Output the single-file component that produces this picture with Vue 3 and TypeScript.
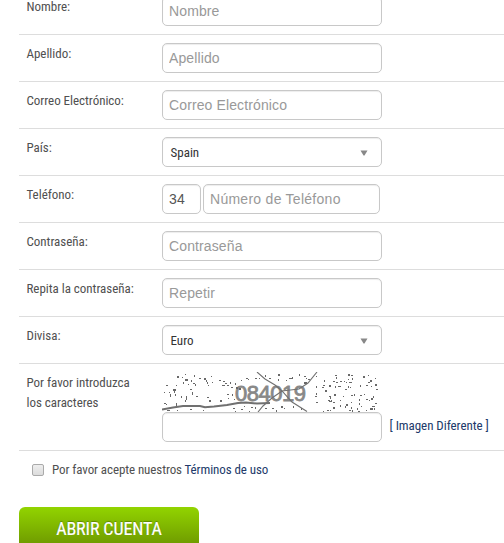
<script setup lang="ts">
interface Field {
  id: string
  label: string
  kind: 'text' | 'select' | 'phone'
  hint: string
}

const fields: Field[] = [
  { id: 'nombre', label: 'Nombre:', kind: 'text', hint: 'Nombre' },
  { id: 'apellido', label: 'Apellido:', kind: 'text', hint: 'Apellido' },
  { id: 'correo', label: 'Correo Electrónico:', kind: 'text', hint: 'Correo Electrónico' },
  { id: 'pais', label: 'País:', kind: 'select', hint: 'Spain' },
  { id: 'telefono', label: 'Teléfono:', kind: 'phone', hint: 'Número de Teléfono' },
  { id: 'clave', label: 'Contraseña:', kind: 'text', hint: 'Contraseña' },
  { id: 'repetir', label: 'Repita la contraseña:', kind: 'text', hint: 'Repetir' },
  { id: 'divisa', label: 'Divisa:', kind: 'select', hint: 'Euro' },
]

// Speckles of the captcha, as [x, y, width, height] on a 220 x 40 grid.
const specks: number[][] = [
  [15, 4, 2, 2], [20, 5, 1, 1], [23, 2, 1, 1], [23, 7, 3, 2], [32, 3, 1, 2], [29, 8, 1, 2], [37, 6, 2, 1],
  [42, 6, 2, 2], [44, 8, 1, 2], [49, 4, 1, 1], [4, 13, 2, 1], [14, 13, 1, 1], [11, 17, 3, 2], [12, 19, 1, 2],
  [2, 20, 1, 1], [7, 20, 1, 1], [8, 22, 1, 3], [13, 22, 1, 2], [21, 10, 1, 2], [26, 12, 1, 1], [31, 11, 2, 1],
  [33, 12, 1, 2], [28, 17, 2, 1], [30, 20, 1, 3], [19, 24, 1, 2], [24, 24, 1, 4], [34, 24, 2, 1], [45, 10, 1, 2],
  [46, 13, 1, 1], [50, 10, 1, 1], [57, 8, 2, 1], [61, 9, 2, 1], [63, 11, 2, 1], [68, 10, 1, 2], [60, 13, 3, 1],
  [65, 13, 2, 1], [69, 15, 2, 1], [73, 11, 1, 2], [74, 15, 2, 2], [45, 25, 2, 1], [47, 28, 2, 2], [65, 22, 2, 1],
  [70, 22, 1, 2], [66, 26, 1, 1], [58, 28, 2, 2], [72, 27, 1, 1], [2, 31, 2, 1], [4, 32, 1, 1], [14, 31, 1, 3],
  [23, 28, 1, 2], [5, 38, 3, 1], [15, 38, 1, 1], [28, 37, 2, 1], [41, 38, 1, 1], [71, 36, 2, 1], [73, 39, 1, 1],
  [84, 6, 2, 1], [86, 7, 1, 1], [93, 6, 2, 1], [79, 8, 1, 1], [77, 16, 2, 2], [82, 34, 1, 1], [89, 35, 2, 1],
  [93, 35, 1, 2], [79, 37, 2, 1], [87, 39, 1, 1], [97, 6, 1, 1], [103, 3, 1, 2], [107, 6, 2, 1], [116, 2, 2, 2],
  [116, 7, 1, 2], [124, 8, 1, 1], [127, 6, 3, 1], [130, 5, 1, 2], [137, 2, 1, 2], [142, 4, 2, 1], [144, 6, 1, 1],
  [142, 10, 3, 2], [146, 7, 2, 1], [103, 36, 2, 1], [110, 36, 2, 1], [114, 38, 1, 2], [119, 34, 2, 2], [122, 36, 1, 1],
  [131, 34, 1, 2], [139, 36, 1, 2], [154, 4, 1, 1], [161, 13, 2, 1], [162, 8, 1, 2], [160, 15, 2, 1], [154, 14, 1, 2],
  [163, 18, 2, 2], [167, 13, 2, 2], [173, 3, 2, 1], [174, 5, 1, 2], [171, 9, 2, 1], [174, 10, 2, 1], [178, 9, 2, 1],
  [173, 14, 1, 2], [176, 14, 3, 1], [186, 2, 2, 2], [189, 3, 2, 1], [186, 7, 1, 1], [190, 6, 1, 2], [182, 9, 1, 1],
  [184, 10, 1, 1], [187, 10, 3, 1], [186, 14, 1, 2], [183, 17, 2, 1], [188, 15, 1, 1], [198, 13, 1, 2], [201, 4, 2, 2],
  [206, 3, 1, 1], [208, 8, 2, 2], [213, 6, 1, 1], [206, 10, 2, 1], [209, 14, 1, 1], [213, 12, 2, 2], [204, 13, 2, 1],
  [214, 17, 2, 1], [154, 21, 1, 2], [153, 24, 2, 1], [154, 30, 2, 1], [167, 24, 2, 1], [168, 25, 1, 2], [166, 28, 2, 1],
  [169, 28, 1, 1], [167, 29, 3, 1], [172, 22, 2, 2], [171, 30, 2, 1], [171, 35, 2, 2], [168, 38, 1, 1], [161, 39, 1, 1],
  [165, 38, 2, 1], [181, 24, 1, 1], [178, 28, 1, 1], [178, 33, 1, 2], [189, 23, 2, 1], [192, 22, 1, 2], [189, 30, 1, 1],
  [184, 32, 2, 2], [183, 34, 1, 2], [189, 35, 1, 2], [187, 38, 2, 1], [190, 38, 1, 2], [195, 36, 1, 2], [197, 27, 1, 2],
  [197, 31, 1, 2], [198, 23, 2, 1], [202, 22, 1, 1], [204, 27, 2, 1], [207, 28, 1, 1], [209, 26, 2, 2], [211, 24, 1, 2],
  [213, 31, 2, 1], [210, 34, 3, 1], [208, 36, 3, 2], [212, 36, 1, 2], [204, 38, 1, 1], [199, 34, 1, 1], [196, 39, 2, 1],
]
</script>

<template>
  <form class="form" @submit.prevent>
    <div v-for="f in fields" :key="f.id" class="row">
      <label class="label" :for="f.id">{{ f.label }}</label>
      <div v-if="f.kind === 'select'" :id="f.id" class="box select">
        <span>{{ f.hint }}</span>
        <svg class="arrow" width="8" height="6" viewBox="0 0 8 6"><path d="M0.5 0.5h7L4.5 5.5h-1z" /></svg>
      </div>
      <div v-else-if="f.kind === 'phone'" class="phone">
        <input class="box prefix" type="text" value="34" />
        <input :id="f.id" class="box number" type="text" :placeholder="f.hint" />
      </div>
      <input v-else :id="f.id" class="box" type="text" :placeholder="f.hint" />
    </div>
    <div class="row captcha">
      <label class="label" for="captcha">Por favor introduzca<br />los caracteres</label>
      <div class="challenge">
        <svg class="noise" width="220" height="40" viewBox="0 0 220 40">
          <text x="73" y="29" textLength="71">084019</text>
          <g shape-rendering="crispEdges">
            <rect v-for="(s, i) in specks" :key="i" :x="s[0]" :y="s[1]" :width="s[2]" :height="s[3]" />
          </g>
          <path class="thick" d="M0 37.5L11 35.5L21 34L38 34L43 35.2L52 34.5L65 33L76 31L84 30.5L95 31.5L108 31" />
          <path class="thin" d="M95 0L103 7L113 13L120 19L130 30L145 39.5" />
          <path class="thin" d="M155 0L146 11L137 17L120 19L110 26L101 34L96 40" />
        </svg>
        <input id="captcha" class="box" type="text" />
      </div>
      <a class="link another">[ Imagen Diferente ]</a>
    </div>
    <label class="terms">
      <input class="check" type="checkbox" />
      <span>Por favor acepte nuestros <a class="link">Términos de uso</a></span>
    </label>
    <button class="submit" type="submit">ABRIR CUENTA</button>
  </form>
</template>

<style>
body { background: #fff; overflow: hidden; }
</style>
<style scoped>
.form { margin: -12px 0 0 19px; font: 13px/20px "Roboto Condensed", Roboto, sans-serif; color: #505050; }
.row { display: flex; align-items: flex-start; height: 47px; box-sizing: border-box; padding: 8px 0 8px 7.5px; border-bottom: 1px solid #ddd; }
.label { width: 135.5px; flex: none; padding-top: 1px; letter-spacing: -0.03px; }
.box { box-sizing: border-box; width: 220px; height: 30px; margin: 0; border: 1px solid #c8c8c8; border-radius: 5px; padding: 0 6px; font: 14px "Liberation Sans", sans-serif; letter-spacing: 0.12px; color: #555; background: #fff; box-shadow: inset 0 1px 1px rgba(0, 0, 0, 0.075); }
.select { font: inherit; display: flex; align-items: center; justify-content: space-between; padding: 2px 13px 0 7.5px; letter-spacing: 0; color: #333; }
.arrow { fill: #888; }
.phone { display: flex; gap: 2px; }
.prefix { width: 39px; }
.number { width: 177px; letter-spacing: 0.27px; }
.box::placeholder { color: #999; opacity: 1; }
.captcha { height: 87px; }
.challenge { display: flex; flex-direction: column; }
.noise { fill: #686868; }
.noise text { font: 22px "Liberation Sans", sans-serif; fill: #888; stroke: #888; stroke-width: 0.8px; }
.thick { fill: none; stroke: #707070; stroke-width: 2px; }
.thin { fill: none; stroke: #707070; stroke-width: 1.1px; }
.link { color: #223a6a; }
.another { margin: 44px 0 0 7.5px; letter-spacing: -0.05px; }
.terms { display: flex; align-items: flex-start; padding: 9px 0 0 13px; letter-spacing: -0.09px; }
.check { appearance: none; box-sizing: border-box; flex: none; width: 12px; height: 12px; margin: 4px 8px 0 0; border: 1px solid #aaa; border-radius: 2px; background: linear-gradient(#eee, #dcdcdc); }
.submit { display: block; box-sizing: border-box; width: 180px; height: 42px; margin: 27px 0 0; padding: 1px 0 0; color: #fff; font: inherit; font-size: 18px; letter-spacing: -0.12px; border: 0; border-radius: 6px; background: linear-gradient(#92d400, #6b9400); text-shadow: 0 -1px 1px rgba(0, 0, 0, 0.3); -webkit-text-stroke: 0.2px #fff; }
</style>
